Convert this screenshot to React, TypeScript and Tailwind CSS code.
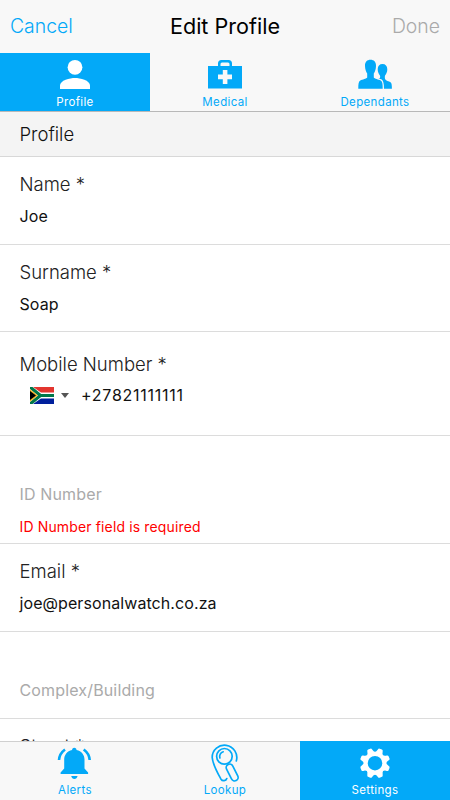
import { ReactNode } from "react";

interface TabProps {
  label: string;
  active?: boolean;
  children: ReactNode;
}

function TopTab({ label, active, children }: TabProps) {
  return (
    <button
      className={`flex flex-1 flex-col items-center pt-[5px] ${
        active ? "bg-[#03a9f8] text-white" : "text-[#03a9f8]"
      }`}
    >
      <svg width="42" height="36" viewBox="0 0 42 36" fill="currentColor">
        {children}
      </svg>
      <span className="text-[11.5px] font-normal leading-[17px] tracking-[0.35px]">{label}</span>
    </button>
  );
}

function BottomTab({ label, active, children }: TabProps) {
  return (
    <button
      className={`flex flex-1 flex-col items-center border-t ${
        active
          ? "border-[#03a9f8] bg-[#03a9f8] text-white"
          : "border-[#d0d0d0] text-[#03a9f8]"
      }`}
    >
      <svg width="40" height="40" viewBox="0 0 40 40" fill="currentColor">
        {children}
      </svg>
      <span className="text-[11.5px] font-normal leading-[17px] tracking-[0.35px]">{label}</span>
    </button>
  );
}

interface FieldProps {
  label: string;
  value: string;
}

function Field({ label, value }: FieldProps) {
  return (
    <div className="h-[87.5px] shrink-0 border-b border-[#dcdcdc] px-[19.5px] pt-[15px]">
      <div className="text-[18.5px] leading-6 text-[#222]">{label}</div>
      <div className="mt-2 text-base font-normal leading-6 tracking-[0.08px] text-[#111]">{value}</div>
    </div>
  );
}

function Flag() {
  return (
    <svg width="24" height="17" viewBox="0 0 24 17">
      <path fill="#fff" d="M0 0h24v17H0z" />
      <path fill="#e3352f" d="M3 0h21v5.5H11z" />
      <path fill="#001f9c" d="M3 17h21v-5.5H11z" />
      <path stroke="#00784a" strokeWidth="3.2" fill="none" d="M0 0l10.5 8.5L0 17M10 8.5h14" />
      <path fill="#f5b52a" d="M0 2.3l8 6.2-8 6.2z" />
      <path fill="#000" d="M0 4l6 4.5L0 13z" />
    </svg>
  );
}

const TEETH = [22.5, 67.5, 112.5, 157.5, 202.5, 247.5, 292.5, 337.5];

function Gear() {
  return (
    <g transform="translate(20 21.2)">
      <circle r="9.2" fill="none" stroke="currentColor" strokeWidth="3.8" />
      {TEETH.map((angle) => (
        <path
          key={angle}
          transform={`rotate(${angle})`}
          d="M-5 -9.8Q-2.8 -11.2 -2.6 -13.8Q-2.4 -15.2 -1.2 -15.2H1.2Q2.4 -15.2 2.6 -13.8Q2.8 -11.2 5 -9.8Z"
        />
      ))}
    </g>
  );
}

export default function App() {
  return (
    <div className="flex h-[800px] w-[450px] flex-col overflow-hidden bg-white font-['Inter',sans-serif] font-light">
      {/* Header */}
      <header className="flex h-[53px] shrink-0 items-center justify-between bg-[#f8f8f8] px-[10px]">
        <button className="w-20 text-left text-[19.4px] text-[#03a9f8]">Cancel</button>
        <h1 className="text-[21.6px] font-normal text-black">Edit Profile</h1>
        <button className="w-20 text-right text-[19.4px] text-[#aaa]">Done</button>
      </header>

      {/* Tabs */}
      <nav className="flex h-[59px] shrink-0 border-b border-[#b8b8b8] bg-[#f8f8f8]">
        <TopTab label="Profile" active>
          <circle cx="21" cy="9.3" r="7.4" />
          <path d="M6 31v-3.7c0-5 10-7.4 15-7.4s15 2.4 15 7.4V31z" />
        </TopTab>
        <TopTab label="Medical">
          <path
            fillRule="evenodd"
            d="M4 8h10V5.5A3.5 3.5 0 0 1 17.5 2h7A3.5 3.5 0 0 1 28 5.5V8h10v22.5H4zM16.5 8h9V6a1.5 1.5 0 0 0-1.5-1.5h-6A1.5 1.5 0 0 0 16.5 6zM18.8 12v4.6H14v4.6h4.8V26h4.6v-4.8H28v-4.6h-4.6V12z"
          />
        </TopTab>
        <TopTab label="Dependants">
          <path d="M28.5 6C25.5 6 23.7 8 23.7 11.2C23.7 14 24.8 16 25.8 17.2C26.3 18 26.3 19.5 25.8 20.2L22 22V30.7H37.9C37.900 27 37.6 25 36.5 24.3C34.8 23.4 32 22.6 31.2 21.3C30.7 20.5 30.7 18 31.2 17.2C32.2 16 33.3 14 33.3 11.2C33.3 8 31.5 6 28.5 6Z" />
          <path
            stroke="#f8f8f8"
            strokeWidth="2.6"
            paintOrder="stroke"
            d="M16.5 1.8C13.2 1.8 10.8 3.8 11 8C11.1 11.5 12.2 14 13.2 15.5V19.5C12.5 20.8 8.5 21.4 6.3 22.5C4.5 23.4 4.3 26 4.3 30.7H28.7C28.7 26 28.5 23.4 26.7 22.5C24.5 21.4 20.5 20.8 19.8 19.5V15.5C20.8 14 21.9 11.5 22 8C22.200 3.8 19.8 1.8 16.5 1.8Z"
          />
        </TopTab>
      </nav>

      {/* Form */}
      <main className="flex min-h-0 flex-1 flex-col overflow-hidden">
        <h2 className="h-[45px] shrink-0 border-b border-[#d8d8d8] bg-[#f4f4f4] px-[19.5px] text-[18.5px] font-light leading-[45px] text-[#111]">
          Profile
        </h2>
        <Field label="Name *" value="Joe" />
        <Field label="Surname *" value="Soap" />

        <div className="h-[104px] shrink-0 border-b border-[#dcdcdc] px-[19.5px] pt-5">
          <div className="text-[18.5px] leading-6 text-[#222]">Mobile Number *</div>
          <div className="mt-[7px] flex h-6 items-center pl-[10.5px]">
            <Flag />
            <svg className="ml-[7px]" width="8" height="5" viewBox="0 0 8 5">
              <path fill="#555" d="M0 0h8L4 5z" />
            </svg>
            <span className="ml-3 text-base font-normal tracking-[0.75px] text-[#111]">
              +27821111111
            </span>
          </div>
        </div>

        <div className="h-[108px] shrink-0 border-b border-[#dcdcdc] px-[19.5px] pt-[46px]">
          <div className="text-base font-normal leading-6 tracking-[0.15px] text-[#aaa]">ID Number</div>
          <div className="mt-[11px] text-sm font-normal leading-5 tracking-[0.14px] text-[#f00]">
            ID Number field is required
          </div>
        </div>

        <Field label="Email *" value="joe@personalwatch.co.za" />

        <div className="h-[87.5px] shrink-0 border-b border-[#dcdcdc] px-[19.5px] pt-[46px]">
          <div className="text-base font-normal leading-6 tracking-[0.15px] text-[#aaa]">Complex/Building</div>
        </div>
        <Field label="Street *" value="" />
      </main>

      {/* Bottom bar */}
      <footer className="flex h-[59px] shrink-0 bg-[#f8f8f8]">
        <BottomTab label="Alerts">
          <path d="M19.3 5.7c1.500 0 2.2 1 2.2 2.2C26.8 9 29.5 13 29.5 17.5v9l3.6 4V32H5.6v-1.500l3.6-4v-9c0-4.500 2.7-8.500 7.9-9.600C17.1 6.7 17.8 5.7 19.3 5.7zM16.2 34h6.4c-.5 2-1.6 3-3.2 3s-2.700-1-3.200-3z" />
          <path fill="none" stroke="currentColor" strokeWidth="2.6" d="M4 18Q4.5 11.5 10 7.5M34.7 18Q34.2 11.5 28.7 7.5" />
        </BottomTab>
        <BottomTab label="Lookup">
          <g fill="none" stroke="currentColor" strokeWidth="1.7" strokeLinecap="round" strokeLinejoin="round">
            <path d="M31.3 19A12.3 12.3 0 1 0 7.2 15.5C7.8 22 12.5 31 16 37.2C17.5 39.5 21 39 21.8 36.5" />
            <circle cx="19.4" cy="14.3" r="7.8" />
            <path d="M14.9 16A4.9 4.9 0 0 1 18.2 9.8" />
            <rect x="23.65" y="21.5" width="7" height="18" rx="3.5" transform="rotate(-26.5 27.15 30.5)" />
          </g>
        </BottomTab>
        <BottomTab label="Settings" active>
          <Gear />
        </BottomTab>
      </footer>
    </div>
  );
}
